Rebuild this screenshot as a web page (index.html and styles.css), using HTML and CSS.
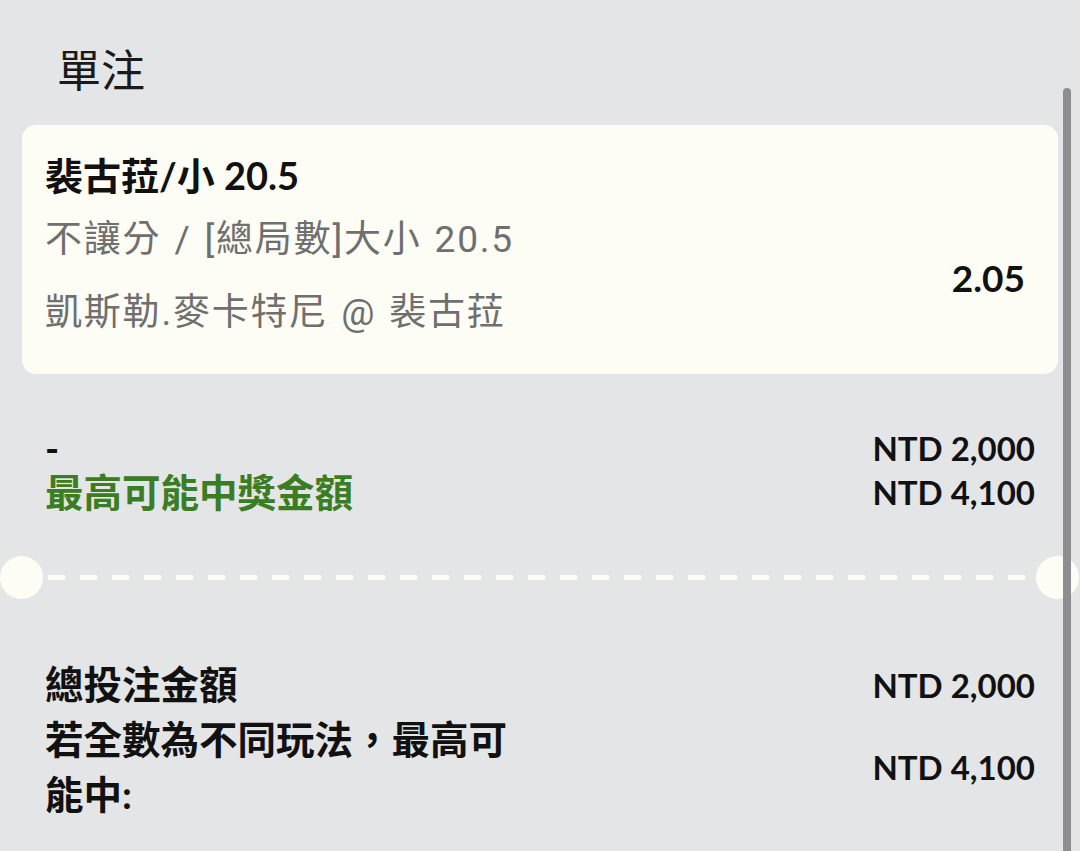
FILE: index.html
```html
<!DOCTYPE html>
<html lang="zh-Hant">
<head>
<meta charset="utf-8">
<title>單注</title>
<link rel="stylesheet" href="styles.css">
</head>
<body>
<div class="page">
  <h1 class="heading">單注</h1>

  <div class="card">
    <div class="card-title">裴古菈/小 20.5</div>
    <div class="card-body">
      <div class="card-info">
        <div class="market">不讓分 / [總局數]大小 20.5</div>
        <div class="match">凱斯勒.麥卡特尼 @ 裴古菈</div>
      </div>
      <div class="odds">2.05</div>
    </div>
  </div>

  <div class="stake">
    <div class="row">
      <div class="label">-</div>
      <div class="amount">NTD 2,000</div>
    </div>
    <div class="row">
      <div class="label win">最高可能中獎金額</div>
      <div class="amount">NTD 4,100</div>
    </div>
  </div>

  <div class="divider">
    <span class="notch"></span>
    <span class="dashes"></span>
    <span class="notch"></span>
  </div>

  <div class="summary">
    <div class="sum-row">
      <div class="sum-label">總投注金額</div>
      <div class="amount">NTD 2,000</div>
    </div>
    <div class="sum-row">
      <div class="sum-label wrap">若全數為不同玩法，最高可能中:</div>
      <div class="amount">NTD 4,100</div>
    </div>
  </div>

  <div class="scrollbar"></div>
</div>
</body>
</html>
```

FILE: styles.css
```css
html, body {
  margin: 0;
  padding: 0;
}

body {
  background: #e4e5e7;
  font-family: Lato, "Noto Sans CJK TC", sans-serif;
  color: #111111;
  width: 1080px;
  height: 851px;
  overflow: hidden;
}

.page {
  position: relative;
  height: 851px;
}

.heading {
  margin: 0;
  padding: 40px 0 25px 57px;
  font-size: 44px;
  line-height: 60px;
  font-weight: 400;
  color: #1a1a1a;
}

.card {
  margin: 0 22px;
  height: 249px;
  box-sizing: border-box;
  background: #fefdf5;
  border-radius: 14px;
  padding: 25px 33px 0 23px;
}

.card-title {
  font-size: 38px;
  font-weight: 700;
  line-height: 50px;
  color: #111111;
}

.card-body {
  display: flex;
  align-items: center;
  justify-content: space-between;
  margin-top: 15px;
}

.market,
.match {
  font-family: Roboto, "Noto Sans CJK TC", sans-serif;
  font-size: 37px;
  line-height: 50px;
  letter-spacing: 1.8px;
  word-spacing: 2px;
  color: #6f6f6f;
}

.match {
  margin-top: 23px;
}

.odds {
  font-size: 37px;
  font-weight: 700;
  line-height: 50px;
  color: #111111;
  margin-top: 2px;
}

.stake {
  margin: 52px 45px 0 45px;
}

.row {
  display: flex;
  justify-content: space-between;
  align-items: center;
  height: 44px;
}

.label {
  font-size: 38px;
  line-height: 44px;
  font-weight: 700;
}

.label.win {
  color: #3a7d22;
  font-size: 38.5px;
}

.amount {
  font-size: 33px;
  font-weight: 700;
  line-height: 44px;
  white-space: nowrap;
  color: #111111;
}

.divider {
  display: flex;
  align-items: center;
  margin-top: 42px;
  height: 43px;
  padding-right: 1px;
}

.notch {
  flex: 0 0 43px;
  height: 43px;
  border-radius: 50%;
  background: #fefdf5;
}

.dashes {
  flex: 1;
  height: 5px;
  margin: 0 4px 0 5px;
  background: repeating-linear-gradient(90deg, #fefdf5 0 17px, transparent 17px 32px);
}

.summary {
  margin: 58px 45px 0 45px;
}

.sum-row {
  display: flex;
  justify-content: space-between;
  align-items: center;
}

.sum-label {
  font-size: 38.5px;
  font-weight: 700;
  line-height: 55px;
  color: #111111;
}

.sum-label.wrap {
  width: 480px;
}

.scrollbar {
  position: absolute;
  left: 1063px;
  top: 88px;
  width: 8px;
  height: 780px;
  border-radius: 4px;
  background: #8e8e91;
}
```
